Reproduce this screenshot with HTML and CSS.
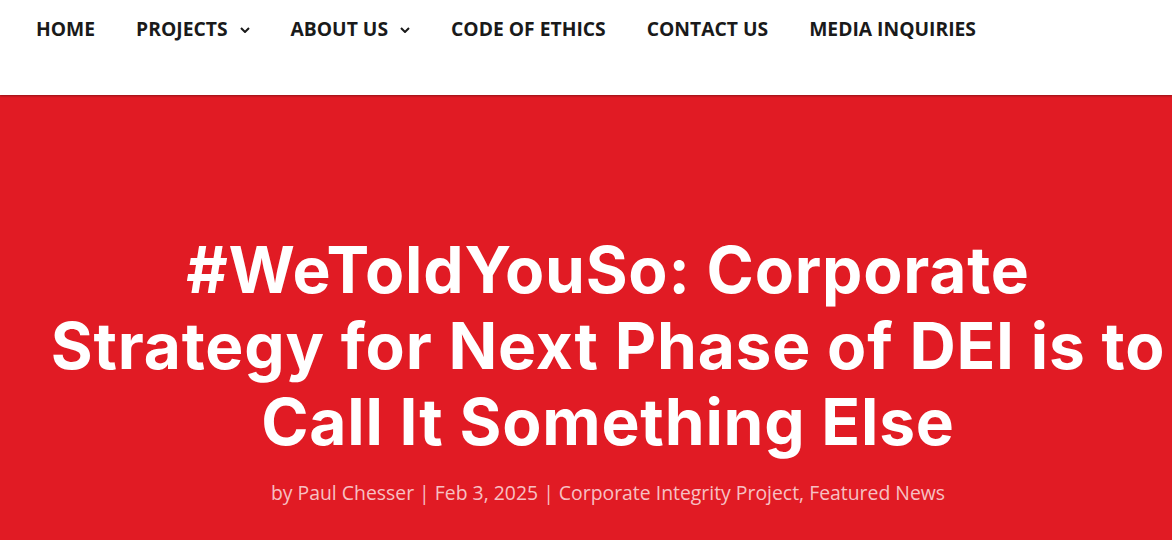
FILE: index.html
```html
<!DOCTYPE html>
<html lang="en">
<head>
<meta charset="utf-8">
<title>#WeToldYouSo</title>
<link rel="stylesheet" href="styles.css">
</head>
<body>
<header class="site-header">
  <nav class="main-nav">
    <a class="nav-item" href="#">HOME</a>
    <a class="nav-item has-sub" href="#">PROJECTS <svg class="chev" viewBox="0 0 10 6" width="10" height="6"><path d="M1 1 L5 5 L9 1" fill="none" stroke="currentColor" stroke-width="2"/></svg></a>
    <a class="nav-item has-sub" href="#">ABOUT US <svg class="chev" viewBox="0 0 10 6" width="10" height="6"><path d="M1 1 L5 5 L9 1" fill="none" stroke="currentColor" stroke-width="2"/></svg></a>
    <a class="nav-item" href="#">CODE OF ETHICS</a>
    <a class="nav-item" href="#">CONTACT US</a>
    <a class="nav-item" href="#">MEDIA INQUIRIES</a>
  </nav>
</header>
<section class="hero">
  <div class="hero-inner">
    <h1 class="title">#WeToldYouSo: Corporate<br>Strategy for Next Phase of DEI is to<br>Call It Something Else</h1>
    <p class="meta">by <a href="#">Paul Chesser</a> | <span>Feb 3, 2025</span> | <a href="#">Corporate Integrity Project</a>, <a href="#">Featured News</a></p>
  </div>
</section>
</body>
</html>
```

FILE: styles.css
```css
* { box-sizing: border-box; }
html, body { margin: 0; padding: 0; }
body {
  background: #ffffff;
  font-family: "Open Sans", "Liberation Sans", sans-serif;
  overflow: hidden;
}
.site-header {
  height: 95px;
  background: #ffffff;
  position: relative;
  z-index: 2;
  box-shadow: 0 1px 2px rgba(0,0,0,0.35);
}
.main-nav {
  display: flex;
  align-items: center;
  gap: 41px;
  padding: 16px 0 0 36px;
}
.nav-item {
  display: inline-flex;
  align-items: center;
  gap: 12px;
  font-size: 19.3px;
  font-weight: 700;
  color: #1a1a1a;
  text-decoration: none;
  line-height: 26px;
}
.chev { display: block; margin-top: 1px; }
.hero {
  background: #e11b24;
  height: 445px;
  padding: 137px 0 0 44px;
}
.hero-inner {
  display: flex;
  flex-direction: column;
  align-items: center;
}
.title {
  margin: 0;
  width: 1128px;
  white-space: nowrap;
  text-align: center;
  color: #ffffff;
  font-family: "Inter", "Open Sans", sans-serif;
  font-weight: 700;
  font-size: 64px;
  line-height: 76px;
  letter-spacing: 0.8px;
}
.meta {
  margin: 20px 0 0;
  color: #f7c0c3;
  font-size: 19.4px;
  line-height: 26px;
}
.meta a { color: inherit; text-decoration: none; }
```
